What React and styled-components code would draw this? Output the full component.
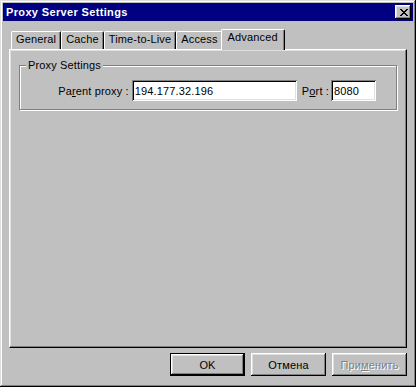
import React from 'react';
import styled, { createGlobalStyle } from 'styled-components';

const Global = createGlobalStyle`
    html, body {
        margin: 0;
        padding: 0;
        background: #c0c0c0;
    }
    * {
        box-sizing: border-box;
    }
`;

const tabs = ['General', 'Cache', 'Time-to-Live', 'Access', 'Advanced'];

export default function App() {
    const active = 'Advanced';

    return (
        <>
            <Global />
            <Window>
                <TitleBar>
                    <Title>Proxy Server Settings</Title>
                    <CloseButton aria-label="Close">
                        <CloseGlyph />
                    </CloseButton>
                </TitleBar>

                <Content>
                    <TabStrip>
                        {tabs.map(tab => (
                            <Tab key={tab} $selected={tab === active}>{tab}</Tab>
                        ))}
                    </TabStrip>
                    <Panel>
                        <Group>
                            <Legend>Proxy Settings</Legend>
                            <Row>
                                <Label $after={3}>Pa<Key>r</Key>ent proxy :</Label>
                                <Field $width={165} defaultValue="194.177.32.196" />
                                <Label $gap={5} $after={2}>P<Key>o</Key>rt :</Label>
                                <Field $width={45} defaultValue="8080" />
                            </Row>
                        </Group>
                    </Panel>
                </Content>

                <Footer>
                    <Button $default>OK</Button>
                    <Button>Отмена</Button>
                    <Button disabled>При<Key>м</Key>енить</Button>
                </Footer>
            </Window>
        </>
    );
}

function CloseGlyph() {
    // bitmap-style X, 8x7
    const rows = [
        [0, 1, 6, 7],
        [1, 2, 5, 6],
        [2, 3, 4, 5],
        [3, 4],
        [2, 3, 4, 5],
        [1, 2, 5, 6],
        [0, 1, 6, 7],
    ];
    return (
        <svg width="8" height="7" viewBox="0 0 8 7" shapeRendering="crispEdges">
            {rows.map((cols, y) =>
                cols.map(x => <rect key={y + '-' + x} x={x} y={y} width="1" height="1" fill="#000" />)
            )}
        </svg>
    );
}

const Window = styled.div`
    width: 416px;
    height: 387px;
    padding: 3px;
    display: flex;
    flex-direction: column;
    background: #c0c0c0;
    box-shadow: inset -1px -1px #000, inset 1px 1px #dfdfdf, inset -2px -2px #808080, inset 2px 2px #fff;
    font-family: "Liberation Sans", Arial, sans-serif;
    font-size: 11px;
    letter-spacing: 0.15px;
    color: #000;
`;

const TitleBar = styled.div`
    height: 18px;
    background: #000080;
    display: flex;
    align-items: center;
    justify-content: space-between;
    padding: 0 2px 0 3px;
`;

const Title = styled.span`
    color: #fff;
    font-weight: 700;
    font-size: 11px;
    line-height: 13px;
    letter-spacing: 0.35px;
`;

const CloseButton = styled.button`
    width: 16px;
    height: 14px;
    padding: 0 0 0 1px;
    border: none;
    background: #c0c0c0;
    display: flex;
    align-items: center;
    justify-content: center;
    box-shadow: inset -1px -1px #000, inset 1px 1px #fff, inset -2px -2px #808080, inset 2px 2px #dfdfdf;
`;

const Content = styled.div`
    flex: 1;
    display: flex;
    flex-direction: column;
    padding: 8px 6px 0;
`;

const TabStrip = styled.div`
    height: 20px;
    display: flex;
    align-items: flex-end;
    padding-left: 2px;
    position: relative;
    z-index: 1;
`;

const Tab = styled.div`
    position: relative;
    z-index: ${props => props.$selected ? 2 : 1};
    height: ${props => props.$selected ? '21px' : '18px'};
    margin: ${props => props.$selected ? '0 -2px -1px' : '0'};
    padding: 1px ${props => props.$selected ? '6px' : '4px'} 0;
    line-height: 13px;
    background: #c0c0c0;
    border-top: 1px solid #fff;
    border-left: 1px solid #fff;
    border-right: 1px solid #000;
    border-radius: 2px 2px 0 0;
    box-shadow: inset -1px 0 #808080;
    white-space: nowrap;
`;

const Panel = styled.div`
    flex: 1;
    padding: 9px 9px 0;
    border-top: 1px solid #fff;
    border-left: 1px solid #fff;
    border-right: 1px solid #000;
    border-bottom: 1px solid #000;
    box-shadow: inset -1px -1px #808080, inset 1px 1px #dfdfdf;
`;

const Group = styled.fieldset`
    margin: 0;
    padding: 8px 20px 8px 0;
    border: 1px solid #808080;
    box-shadow: inset 1px 1px #fff, 1px 1px #fff;
`;

const Legend = styled.legend`
    margin-left: 6px;
    padding: 0 2px;
    line-height: 13px;
    background: #c0c0c0;
`;

const Row = styled.div`
    display: flex;
    align-items: center;
    justify-content: flex-end;
`;

const Label = styled.label`
    margin-left: ${props => props.$gap || 0}px;
    margin-right: ${props => props.$after || 0}px;
    white-space: nowrap;
`;

const Key = styled.span`
    text-decoration: underline;
`;

const Field = styled.input`
    width: ${props => props.$width}px;
    height: 21px;
    padding: 2px 2px 1px 3px;
    border: none;
    outline: none;
    background: #fff;
    font-family: "Liberation Sans", Arial, sans-serif;
    font-size: 11px;
    letter-spacing: 0.15px;
    color: #000;
    box-shadow: inset 1px 1px #808080, inset -1px -1px #fff, inset 2px 2px #000, inset -2px -2px #dfdfdf;
`;

const Footer = styled.div`
    display: flex;
    justify-content: flex-end;
    gap: 6px;
    padding: 5px 6px 8px;
`;

const Button = styled.button`
    width: 75px;
    height: 23px;
    padding: 0;
    background: #c0c0c0;
    font-family: "Liberation Sans", Arial, sans-serif;
    font-size: 11px;
    letter-spacing: 0.15px;
    color: #000;
    border: ${props => props.$default ? '1px solid #000' : 'none'};
    box-shadow: inset -1px -1px #000, inset 1px 1px #fff, inset -2px -2px #808080, inset 2px 2px #dfdfdf;

    &:disabled {
        color: #808080;
        text-shadow: 1px 1px #fff;
    }
`;
